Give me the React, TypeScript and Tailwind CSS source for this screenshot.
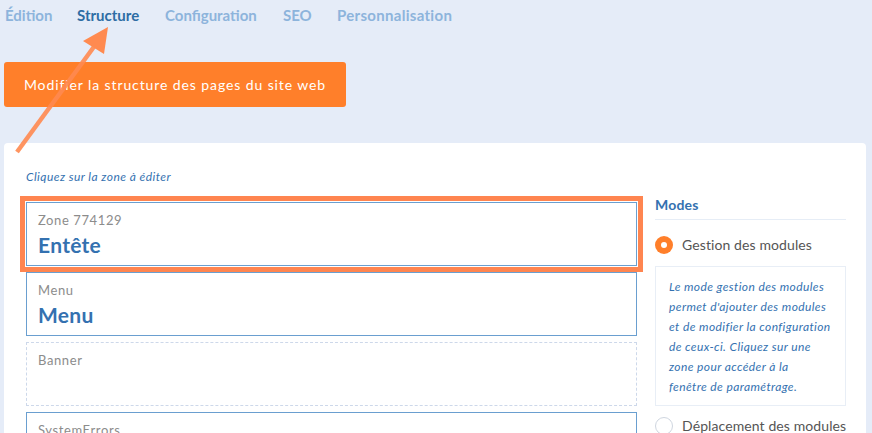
import React from "react";

const tabs = ["Édition", "Structure", "Configuration", "SEO", "Personnalisation"];

function Zone({
  label,
  title,
  dashed,
  highlight,
}: {
  label: string;
  title?: string;
  dashed?: boolean;
  highlight?: boolean;
}) {
  return (
    <div
      className={
        "h-[64px] pl-[11px] pt-[9px] " +
        (dashed ? "border border-dashed border-[#cdd8ea] " : "border border-[#6a9fd0] ") +
        (highlight ? "outline outline-[5px] outline-[#ff8550] outline-offset-[1px]" : "")
      }
    >
      <div className="text-[13px] leading-[16px] tracking-[0.6px] text-[#8c8c8c]">{label}</div>
      {title && (
        <div className="mt-[4px] text-[21px] leading-[26px] font-bold tracking-[0.3px] text-[#3471b0]">{title}</div>
      )}
    </div>
  );
}

export default function App() {
  return (
    <div
      className="relative h-[433px] w-[872px] overflow-hidden bg-[#e5ecf8]"
      style={{ fontFamily: "Lato, 'Noto Sans', sans-serif" }}
    >
      <div className="flex pl-[5px] pt-[5px] text-[15px] leading-[20px] font-bold">
        <span className="w-[72px] text-[#8db4dc]">Édition</span>
        <span className="w-[88px] text-[#2e6da4]">Structure</span>
        <span className="w-[118px] text-[#8db4dc]">Configuration</span>
        <span className="w-[54px] text-[#8db4dc]">SEO</span>
        <span className="tracking-[0.3px] text-[#8db4dc]">Personnalisation</span>
      </div>

      <div className="ml-[4px] mt-[37px] flex h-[45px] w-[342px] items-center justify-center rounded-[3px] bg-[#ff7f2a] text-[14px] tracking-[0.9px] text-white">
        Modifier la structure des pages du site web
      </div>

      <div className="ml-[4px] mt-[36px] h-[300px] w-[862px] rounded-[4px] bg-white pl-[22px] pr-[20px] pt-[26px]">
        <div className="flex items-start gap-[18px]">
          <div className="w-[611px]">
            <div className="text-[12px] italic leading-[16px] tracking-[0.45px] text-[#3471b0]">
              Cliquez sur la zone à éditer
            </div>
            <div className="mt-[17px] flex flex-col gap-[6px]">
              <Zone label="Zone 774129" title="Entête" highlight />
              <Zone label="Menu" title="Menu" />
              <Zone label="Banner" dashed />
              <Zone label="SystemErrors" />
            </div>
          </div>

          <div className="mt-[26px] w-[191px]">
            <div className="border-b border-[#e6edf6] pb-[4px] text-[14px] font-bold leading-[20px] tracking-[0.2px] text-[#3471b0]">
              Modes
            </div>
            <div className="mt-[15px] flex items-center gap-[9px] whitespace-nowrap text-[14px] leading-[20px] tracking-[0.1px] text-[#555]">
              <span className="flex h-[18px] w-[18px] shrink-0 items-center justify-center rounded-full bg-[#ff7f2a]">
                <span className="h-[6px] w-[6px] rounded-full bg-white" />
              </span>
              Gestion des modules
            </div>
            <div className="mt-[11px] whitespace-nowrap border border-[#e8eef6] px-[13px] pb-[8px] pt-[10px] text-[12px] italic leading-[20px] tracking-[0.4px] text-[#3471b0]">
              Le mode gestion des modules
              <br />
              permet d'ajouter des modules
              <br />
              et de modifier la configuration
              <br />
              de ceux-ci. Cliquez sur une
              <br />
              zone pour accéder à la
              <br />
              fenêtre de paramétrage.
            </div>
            <div className="mt-[10px] flex items-center gap-[9px] whitespace-nowrap text-[14px] leading-[20px] tracking-[0.1px] text-[#555]">
              <span className="h-[18px] w-[18px] shrink-0 rounded-full border border-[#cfd6e0] bg-white" />
              Déplacement des modules
            </div>
          </div>
        </div>
      </div>

      <svg className="pointer-events-none absolute left-0 top-0" width="200" height="200">
        <line x1="17" y1="152" x2="96" y2="44" stroke="#ff8a50" strokeOpacity="0.9" strokeWidth="4.5" />
        <polygon points="108,27 83,41 104,54" fill="#ff8a50" />
      </svg>
    </div>
  );
}
